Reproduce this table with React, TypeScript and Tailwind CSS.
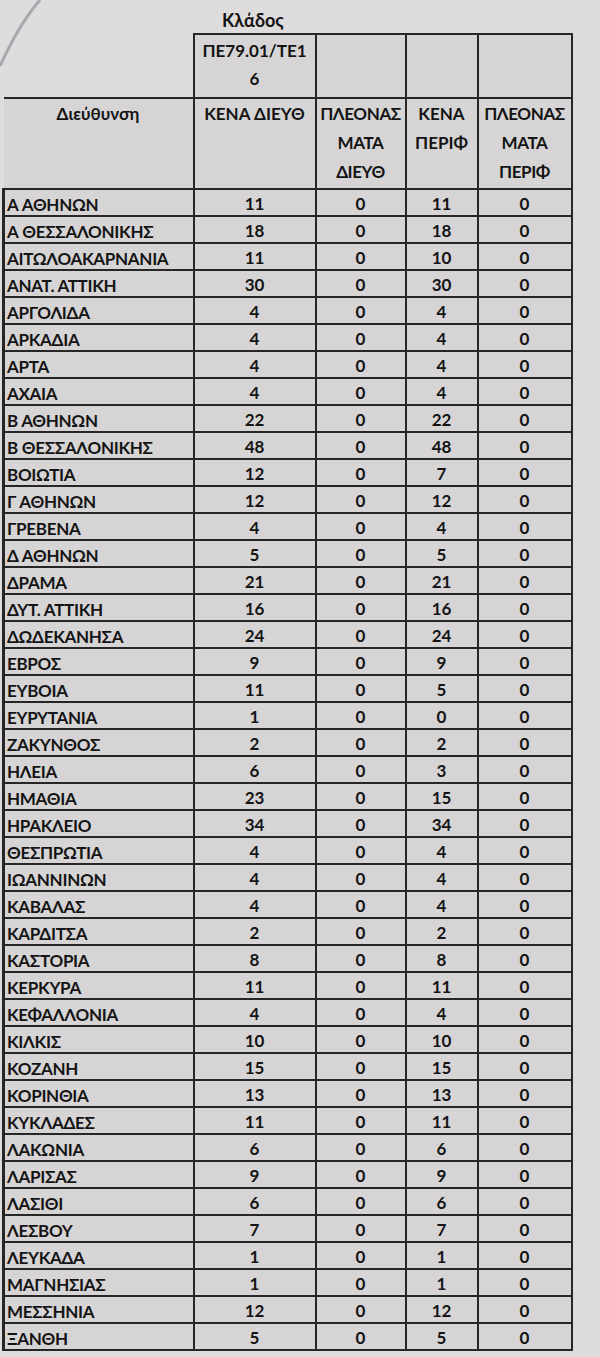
const rows: [string, number, number, number, number][] = [
  ["Α ΑΘΗΝΩΝ", 11, 0, 11, 0],
  ["Α ΘΕΣΣΑΛΟΝΙΚΗΣ", 18, 0, 18, 0],
  ["ΑΙΤΩΛΟΑΚΑΡΝΑΝΙΑ", 11, 0, 10, 0],
  ["ΑΝΑΤ. ΑΤΤΙΚΗ", 30, 0, 30, 0],
  ["ΑΡΓΟΛΙΔΑ", 4, 0, 4, 0],
  ["ΑΡΚΑΔΙΑ", 4, 0, 4, 0],
  ["ΑΡΤΑ", 4, 0, 4, 0],
  ["ΑΧΑΙΑ", 4, 0, 4, 0],
  ["Β ΑΘΗΝΩΝ", 22, 0, 22, 0],
  ["Β ΘΕΣΣΑΛΟΝΙΚΗΣ", 48, 0, 48, 0],
  ["ΒΟΙΩΤΙΑ", 12, 0, 7, 0],
  ["Γ ΑΘΗΝΩΝ", 12, 0, 12, 0],
  ["ΓΡΕΒΕΝΑ", 4, 0, 4, 0],
  ["Δ ΑΘΗΝΩΝ", 5, 0, 5, 0],
  ["ΔΡΑΜΑ", 21, 0, 21, 0],
  ["ΔΥΤ. ΑΤΤΙΚΗ", 16, 0, 16, 0],
  ["ΔΩΔΕΚΑΝΗΣΑ", 24, 0, 24, 0],
  ["ΕΒΡΟΣ", 9, 0, 9, 0],
  ["ΕΥΒΟΙΑ", 11, 0, 5, 0],
  ["ΕΥΡΥΤΑΝΙΑ", 1, 0, 0, 0],
  ["ΖΑΚΥΝΘΟΣ", 2, 0, 2, 0],
  ["ΗΛΕΙΑ", 6, 0, 3, 0],
  ["ΗΜΑΘΙΑ", 23, 0, 15, 0],
  ["ΗΡΑΚΛΕΙΟ", 34, 0, 34, 0],
  ["ΘΕΣΠΡΩΤΙΑ", 4, 0, 4, 0],
  ["ΙΩΑΝΝΙΝΩΝ", 4, 0, 4, 0],
  ["ΚΑΒΑΛΑΣ", 4, 0, 4, 0],
  ["ΚΑΡΔΙΤΣΑ", 2, 0, 2, 0],
  ["ΚΑΣΤΟΡΙΑ", 8, 0, 8, 0],
  ["ΚΕΡΚΥΡΑ", 11, 0, 11, 0],
  ["ΚΕΦΑΛΛΟΝΙΑ", 4, 0, 4, 0],
  ["ΚΙΛΚΙΣ", 10, 0, 10, 0],
  ["ΚΟΖΑΝΗ", 15, 0, 15, 0],
  ["ΚΟΡΙΝΘΙΑ", 13, 0, 13, 0],
  ["ΚΥΚΛΑΔΕΣ", 11, 0, 11, 0],
  ["ΛΑΚΩΝΙΑ", 6, 0, 6, 0],
  ["ΛΑΡΙΣΑΣ", 9, 0, 9, 0],
  ["ΛΑΣΙΘΙ", 6, 0, 6, 0],
  ["ΛΕΣΒΟΥ", 7, 0, 7, 0],
  ["ΛΕΥΚΑΔΑ", 1, 0, 1, 0],
  ["ΜΑΓΝΗΣΙΑΣ", 1, 0, 1, 0],
  ["ΜΕΣΣΗΝΙΑ", 12, 0, 12, 0],
  ["ΞΑΝΘΗ", 5, 0, 5, 0],
];

const cell = "border-2 border-[#262626] bg-[#d6d4d5]";
const head = `${cell} align-top text-[17px] leading-[29px] pt-0 font-bold`;

export default function App() {
  return (
    <div className="relative w-[600px] h-[1357px] overflow-hidden bg-[#dedcdd] text-[#141414] font-['Lato','Open_Sans',sans-serif] font-bold">
      {/* pen / fold line at top left */}
      <svg className="absolute left-0 top-0" width="60" height="80" viewBox="0 0 60 80">
        <path d="M0 66 C 12 40, 24 18, 40 0" stroke="#a9a8ae" strokeWidth="3" fill="none" />
      </svg>

      <div className="pl-[2px]">
        <div className="h-[33px] flex items-end pb-[4px]">
          <span className="ml-[220px] text-[18px] font-bold leading-none">Κλάδος</span>
        </div>
        <table className="border-collapse table-fixed w-[568px]">
          <colgroup>
            <col className="w-[190px]" />
            <col className="w-[122px]" />
            <col className="w-[90px]" />
            <col className="w-[72px]" />
            <col className="w-[94px]" />
          </colgroup>
          <thead>
            <tr className="h-[64px]">
              <th className="border-0 bg-transparent"></th>
              <th className={`${cell} align-top text-[17px] leading-[28px] font-bold pt-[2px]`}>
                ΠΕ79.01/ΤΕ1
                <br />6
              </th>
              <th className={cell}></th>
              <th className={cell}></th>
              <th className={cell}></th>
            </tr>
            <tr className="h-[91px]">
              <th className={`${head} border-l-0`}>Διεύθυνση</th>
              <th className={`${head} whitespace-nowrap`}>ΚΕΝΑ ΔΙΕΥΘ</th>
              <th className={`${head} tracking-[-0.4px]`}>
                ΠΛΕΟΝΑΣ
                <br />
                ΜΑΤΑ
                <br />
                ΔΙΕΥΘ
              </th>
              <th className={head}>
                ΚΕΝΑ
                <br />
                ΠΕΡΙΦ
              </th>
              <th className={`${head} tracking-[-0.4px]`}>
                ΠΛΕΟΝΑΣ
                <br />
                ΜΑΤΑ
                <br />
                ΠΕΡΙΦ
              </th>
            </tr>
          </thead>
          <tbody>
            {rows.map(([name, a, b, c, d]) => (
              <tr key={name} className="h-[27px] text-[17px] leading-none">
                <td className={`${cell} border-l-[3px] pl-[2px] pt-[3px] whitespace-nowrap tracking-[-0.3px]`}>{name}</td>
                <td className={`${cell} text-center pt-[2px]`}>{a}</td>
                <td className={`${cell} text-center pt-[2px]`}>{b}</td>
                <td className={`${cell} text-center pt-[2px]`}>{c}</td>
                <td className={`${cell} text-center pt-[2px]`}>{d}</td>
              </tr>
            ))}
          </tbody>
        </table>
      </div>
    </div>
  );
}
